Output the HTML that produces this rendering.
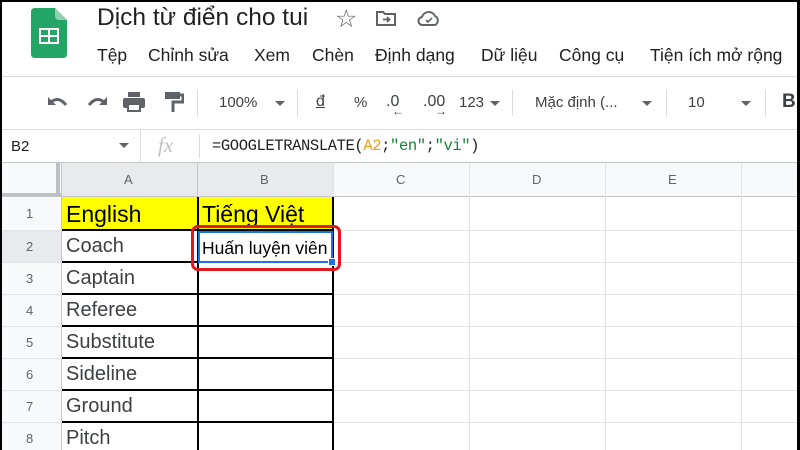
<!DOCTYPE html>
<html><head><meta charset="utf-8"><style>
*{margin:0;padding:0;box-sizing:border-box}
body{width:800px;height:450px;overflow:hidden;background:#fff;font-family:"Liberation Sans",Arial,sans-serif;position:relative;color:#3c4043}
.a{position:absolute}
.t{white-space:nowrap}
.m{position:absolute;top:45px;font-size:17.5px;color:#202124;white-space:nowrap}
</style></head><body>
<div class="a" style="left:0;top:0;width:800px;height:2px;background:#000"></div>
<div class="a" style="left:0;top:0;width:2px;height:450px;background:#000"></div>
<div class="a" style="right:0;top:0;width:3px;height:450px;background:#000"></div>
<svg class="a" style="left:31px;top:8px" width="36" height="50" viewBox="0 0 36 50">
<path d="M4 0H24L36 12V46Q36 50 32 50H4Q0 50 0 46V4Q0 0 4 0Z" fill="#23a566"/>
<path d="M24 0L36 12H28Q24 12 24 8Z" fill="#8ed1b1"/>
<rect x="8" y="20" width="20" height="16" fill="#fff"/>
<rect x="10" y="22" width="7" height="5" fill="#23a566"/><rect x="19" y="22" width="7" height="5" fill="#23a566"/>
<rect x="10" y="29" width="7" height="5" fill="#23a566"/><rect x="19" y="29" width="7" height="5" fill="#23a566"/>
</svg>
<div class="a t" style="left:97px;top:4px;font-size:24.5px;color:#202124">Dịch từ điển cho tui</div>
<div class="a t" style="left:335px;top:4px;font-size:25px;color:#5f6368">☆</div>
<svg class="a" style="left:376px;top:10px" width="20" height="16" viewBox="0 0 20 16"><path d="M1 2H7L9 4H19V15H1Z" fill="none" stroke="#5f6368" stroke-width="2"/><path d="M7 9.5H13M11 7L13.5 9.5L11 12" fill="none" stroke="#5f6368" stroke-width="1.8"/></svg>
<svg class="a" style="left:417px;top:10px" width="24" height="16" viewBox="0 0 24 16"><path d="M6 15H18A5 5 0 0 0 18 6A7 7 0 0 0 5 7A4 4 0 0 0 6 15Z" fill="none" stroke="#5f6368" stroke-width="2"/><path d="M9 10L11 12L15 8" fill="none" stroke="#5f6368" stroke-width="1.6"/></svg>
<div class="m" style="left:97px">Tệp</div>
<div class="m" style="left:148px">Chỉnh sửa</div>
<div class="m" style="left:254px">Xem</div>
<div class="m" style="left:312px">Chèn</div>
<div class="m" style="left:375px">Định dạng</div>
<div class="m" style="left:481px">Dữ liệu</div>
<div class="m" style="left:559px">Công cụ</div>
<div class="m" style="left:650px">Tiện ích mở rộng</div>
<div class="a" style="left:2px;top:76px;width:795px;height:1px;background:#dadce0"></div>
<svg class="a" style="left:46px;top:93px" width="24" height="18" viewBox="0 0 24 18"><path d="M4 10Q12 2 20 12" fill="none" stroke="#5f6368" stroke-width="3"/><path d="M2 4V12H10Z" fill="#5f6368"/></svg>
<svg class="a" style="left:85px;top:93px" width="24" height="18" viewBox="0 0 24 18"><path d="M20 10Q12 2 4 12" fill="none" stroke="#5f6368" stroke-width="3"/><path d="M22 4V12H14Z" fill="#5f6368"/></svg>
<svg class="a" style="left:123px;top:91px" width="22" height="22" viewBox="0 0 22 22"><rect x="5" y="1" width="12" height="5" fill="#5f6368"/><rect x="0" y="7" width="22" height="10" rx="2" fill="#5f6368"/><rect x="5" y="13" width="12" height="7" fill="#fff" stroke="#5f6368" stroke-width="2"/></svg>
<svg class="a" style="left:164px;top:91px" width="20" height="22" viewBox="0 0 20 22"><rect x="1" y="1" width="15" height="7" fill="#5f6368"/><path d="M16 4H19V11H9V21" fill="none" stroke="#5f6368" stroke-width="3"/></svg>
<div class="a" style="left:197px;top:90px;width:1px;height:26px;background:#dadce0"></div>
<div class="a t" style="left:219px;top:94px;font-size:15px">100%</div>
<div class="a" style="left:275px;top:101px;border:5px solid transparent;border-top:5px solid #5f6368"></div>
<div class="a" style="left:297px;top:90px;width:1px;height:26px;background:#dadce0"></div>
<div class="a t" style="left:316px;top:93px;font-size:16px;text-decoration:underline">đ</div>
<div class="a t" style="left:354px;top:94px;font-size:15px">%</div>
<div class="a t" style="left:386px;top:93px;font-size:16px">.0</div>
<div class="a t" style="left:392px;top:104px;font-size:12px">←</div>
<div class="a t" style="left:423px;top:93px;font-size:16px">.00</div>
<div class="a t" style="left:435px;top:104px;font-size:12px">→</div>
<div class="a t" style="left:459px;top:94px;font-size:15px">123</div>
<div class="a" style="left:490px;top:101px;border:5px solid transparent;border-top:5px solid #5f6368"></div>
<div class="a" style="left:512px;top:90px;width:1px;height:26px;background:#dadce0"></div>
<div class="a t" style="left:535px;top:94px;font-size:15px">Mặc định (...</div>
<div class="a" style="left:642px;top:101px;border:5px solid transparent;border-top:5px solid #5f6368"></div>
<div class="a" style="left:666px;top:90px;width:1px;height:26px;background:#dadce0"></div>
<div class="a t" style="left:688px;top:94px;font-size:15px">10</div>
<div class="a" style="left:741px;top:101px;border:5px solid transparent;border-top:5px solid #5f6368"></div>
<div class="a" style="left:765px;top:90px;width:1px;height:26px;background:#dadce0"></div>
<div class="a t" style="left:782px;top:91px;font-size:19px;font-weight:bold">B</div>
<div class="a" style="left:2px;top:129px;width:795px;height:1px;background:#dadce0"></div>
<div class="a t" style="left:11px;top:138px;font-size:15px;color:#202124">B2</div>
<div class="a" style="left:119px;top:143px;border:5px solid transparent;border-top:5px solid #5f6368"></div>
<div class="a" style="left:140px;top:130px;width:1px;height:33px;background:#dadce0"></div>
<div class="a t" style="left:158px;top:133px;font-size:21px;font-style:italic;font-family:'Liberation Serif',serif;color:#c0c0c0">fx</div>
<div class="a" style="left:199px;top:134px;width:1px;height:24px;background:#dadce0"></div>
<div class="a t" style="left:212px;top:137px;font-size:15.5px;font-family:'Liberation Mono',monospace;letter-spacing:-0.4px;color:#202124">=GOOGLETRANSLATE(<span style="color:#f09d1a">A2</span>;<span style="color:#188038">"en"</span>;<span style="color:#188038">"vi"</span>)</div>
<div class="a" style="left:2px;top:162px;width:795px;height:1px;background:#c4c7c5"></div>
<div class="a" style="left:2px;top:163px;width:795px;height:34px;background:#f8f9fa"></div>
<div class="a" style="left:62px;top:163px;width:271px;height:34px;background:#e8eaed"></div>
<div class="a" style="left:2px;top:163px;width:60px;height:287px;background:#f8f9fa"></div>
<div class="a" style="left:2px;top:230px;width:60px;height:32px;background:#e8eaed"></div>
<div class="a" style="left:56px;top:163px;width:4px;height:34px;background:#bdc1c6"></div>
<div class="a" style="left:2px;top:193px;width:60px;height:4px;background:#bdc1c6"></div>
<div class="a" style="left:61px;top:163px;width:1px;height:287px;background:#c4c7c5"></div>
<div class="a" style="left:2px;top:196px;width:795px;height:1px;background:#c4c7c5"></div>
<div class="a" style="left:197px;top:163px;width:1px;height:34px;background:#c4c7c5"></div>
<div class="a" style="left:333px;top:163px;width:1px;height:287px;background:#e2e3e3"></div>
<div class="a" style="left:469px;top:163px;width:1px;height:287px;background:#e2e3e3"></div>
<div class="a" style="left:605px;top:163px;width:1px;height:287px;background:#e2e3e3"></div>
<div class="a" style="left:741px;top:163px;width:1px;height:287px;background:#e2e3e3"></div>
<div class="a t" style="left:124px;top:172px;font-size:13px;color:#5f6368">A</div>
<div class="a t" style="left:260px;top:172px;font-size:13px;color:#5f6368">B</div>
<div class="a t" style="left:396px;top:172px;font-size:13px;color:#5f6368">C</div>
<div class="a t" style="left:532px;top:172px;font-size:13px;color:#5f6368">D</div>
<div class="a t" style="left:668px;top:172px;font-size:13px;color:#5f6368">E</div>
<div class="a" style="left:2px;top:230px;width:795px;height:1px;background:#e2e3e3"></div>
<div class="a" style="left:2px;top:262px;width:795px;height:1px;background:#e2e3e3"></div>
<div class="a" style="left:2px;top:294px;width:795px;height:1px;background:#e2e3e3"></div>
<div class="a" style="left:2px;top:326px;width:795px;height:1px;background:#e2e3e3"></div>
<div class="a" style="left:2px;top:358px;width:795px;height:1px;background:#e2e3e3"></div>
<div class="a" style="left:2px;top:390px;width:795px;height:1px;background:#e2e3e3"></div>
<div class="a" style="left:2px;top:422px;width:795px;height:1px;background:#e2e3e3"></div>
<div class="a" style="left:62px;top:197px;width:271px;height:33px;background:#ffff00"></div>
<div class="a" style="left:197px;top:197px;width:2px;height:253px;background:#000"></div>
<div class="a" style="left:332px;top:197px;width:2px;height:253px;background:#000"></div>
<div class="a" style="left:62px;top:229px;width:272px;height:2px;background:#000"></div>
<div class="a" style="left:62px;top:261px;width:272px;height:2px;background:#000"></div>
<div class="a" style="left:62px;top:293px;width:272px;height:2px;background:#000"></div>
<div class="a" style="left:62px;top:325px;width:272px;height:2px;background:#000"></div>
<div class="a" style="left:62px;top:357px;width:272px;height:2px;background:#000"></div>
<div class="a" style="left:62px;top:389px;width:272px;height:2px;background:#000"></div>
<div class="a" style="left:62px;top:421px;width:272px;height:2px;background:#000"></div>
<div class="a t" style="left:26px;top:206px;font-size:13px;color:#5f6368">1</div>
<div class="a t" style="left:26px;top:239px;font-size:13px;color:#5f6368">2</div>
<div class="a t" style="left:26px;top:271px;font-size:13px;color:#5f6368">3</div>
<div class="a t" style="left:26px;top:303px;font-size:13px;color:#5f6368">4</div>
<div class="a t" style="left:26px;top:335px;font-size:13px;color:#5f6368">5</div>
<div class="a t" style="left:26px;top:367px;font-size:13px;color:#5f6368">6</div>
<div class="a t" style="left:26px;top:399px;font-size:13px;color:#5f6368">7</div>
<div class="a t" style="left:26px;top:431px;font-size:13px;color:#5f6368">8</div>
<div class="a t" style="left:66px;top:201px;font-size:23px;color:#000">English</div>
<div class="a t" style="left:202px;top:201px;font-size:23px;color:#000">Tiếng Việt</div>
<div class="a t" style="left:66px;top:235px;font-size:20px;color:#3c4043">Coach</div>
<div class="a t" style="left:66px;top:267px;font-size:20px;color:#3c4043">Captain</div>
<div class="a t" style="left:66px;top:299px;font-size:20px;color:#3c4043">Referee</div>
<div class="a t" style="left:66px;top:331px;font-size:20px;color:#3c4043">Substitute</div>
<div class="a t" style="left:66px;top:363px;font-size:20px;color:#3c4043">Sideline</div>
<div class="a t" style="left:66px;top:395px;font-size:20px;color:#3c4043">Ground</div>
<div class="a t" style="left:66px;top:427px;font-size:20px;color:#3c4043">Pitch</div>
<div class="a" style="left:198px;top:231px;width:135px;height:32px;border:2px solid #1a73e8;background:#fff"></div>
<div class="a t" style="left:202px;top:238px;font-size:17.5px;color:#000">Huấn luyện viên</div>
<div class="a" style="left:328px;top:258px;width:8px;height:8px;background:#1a73e8;border:1px solid #fff"></div>
<div class="a" style="left:191px;top:225px;width:150px;height:46px;border:3px solid #e0191e;border-radius:7px"></div>
</body></html>
